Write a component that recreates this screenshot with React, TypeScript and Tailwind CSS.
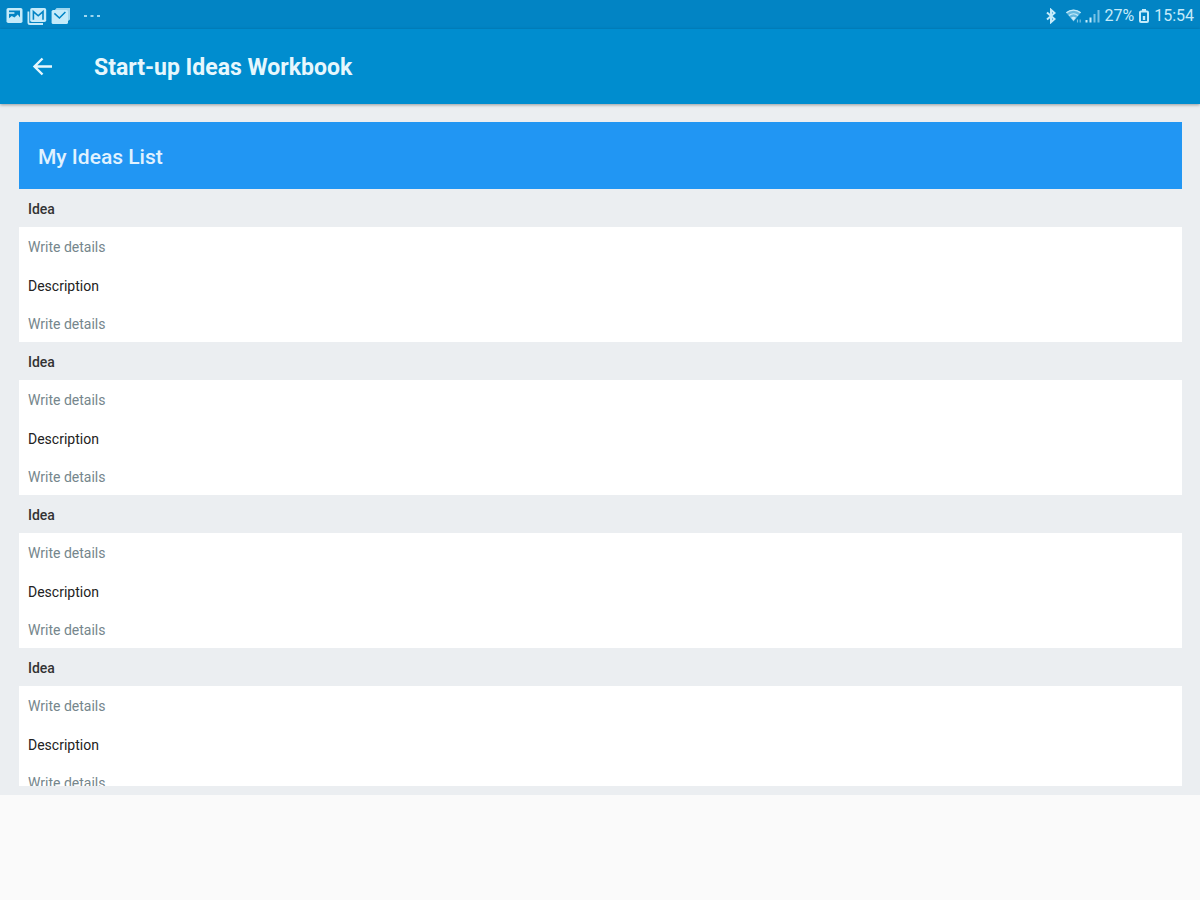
import { useState } from "react";

type Entry = {
  idea: string;
  description: string;
};

const emptyEntries: Entry[] = Array.from({ length: 4 }, () => ({ idea: "", description: "" }));

const PictureIcon = () => (
  <svg width="17" height="17" viewBox="0 0 17 17" aria-hidden="true">
    <rect x="0.5" y="1" width="16" height="15" rx="1.8" fill="currentColor" />
    <path d="M3 3.6h11v7l-2.2-3.2-3.4 3L5.8 9 3 11.2z" fill="#0284c4" />
    <path d="M3 5.2h5.4v1.6H3z" fill="currentColor" />
  </svg>
);

const GmailIcon = () => (
  <svg width="20" height="18" viewBox="0 0 20 18" aria-hidden="true">
    <path d="M1.4 4.5v10.9A1.6 1.6 0 0 0 3 17h13" fill="none" stroke="currentColor" strokeWidth="1.8" />
    <rect x="3.2" y="1" width="16" height="14" rx="1.8" fill="currentColor" />
    <path d="M6.4 12.8V4.6l4.8 4.2L16 4.6v8.2" fill="none" stroke="#0284c4" strokeWidth="1.6" />
  </svg>
);

const MailIcon = () => (
  <svg width="20" height="18" viewBox="0 0 20 18" aria-hidden="true">
    <path d="M4 2.8 5.6 1H19v11.5L17 14" fill="currentColor" opacity="0.8" />
    <rect x="0.6" y="3" width="16.4" height="14" rx="1.6" fill="currentColor" />
    <path d="m3.4 6.4 5 4.6 6-6" fill="none" stroke="#0284c4" strokeWidth="1.5" />
  </svg>
);

const BluetoothIcon = () => (
  <svg width="12" height="16" viewBox="0 0 12 16" aria-hidden="true">
    <path d="m2 4.5 7.5 6.6L6 14.2V1.8l3.5 3.1L2 11.5" fill="none" stroke="currentColor" strokeWidth="2" />
  </svg>
);

const WifiIcon = () => (
  <svg width="18" height="16" viewBox="0 0 18 16" aria-hidden="true">
    <path d="M1 4.6C5.2.8 11.8.8 16 4.6l-7.5 9z" fill="currentColor" opacity="0.5" />
    <path d="M1.4 4.8c4-3.6 10.2-3.6 14.2 0M4 7.600c2.600-2.200 6.400-2.200 9 0" fill="none" stroke="currentColor" strokeWidth="1.3" />
    <path d="M6 9.8a3.8 3.8 0 0 1 5 0l-2.5 3z" fill="currentColor" />
    <path d="M12.5 14.5v-3M15.2 11.5v3" stroke="currentColor" strokeWidth="1.2" opacity="0.6" />
  </svg>
);

const SignalIcon = () => (
  <svg width="15" height="16" viewBox="0 0 15 16" aria-hidden="true">
    <path d="M1.5 14.5V12M5.5 14.5v-5" stroke="currentColor" strokeWidth="2" />
    <path d="M9.5 14.5V6M13.5 14.5V2" stroke="currentColor" strokeWidth="2" opacity="0.6" />
  </svg>
);

const BatteryIcon = () => (
  <svg width="12" height="16" viewBox="0 0 12 16" aria-hidden="true">
    <path d="M4 1h4v2H4z" fill="currentColor" />
    <rect x="2" y="3.5" width="8" height="10.5" rx="1" fill="none" stroke="currentColor" strokeWidth="2" />
    <path d="M4.8 8h2.400v4H4.8z" fill="currentColor" />
  </svg>
);

const StatusBar = () => (
  <div className="flex h-[29px] shrink-0 items-center justify-between bg-[#0284c4] px-[6px] pt-[2px] text-[#c5ebfa]">
    <div className="flex items-center gap-1">
      <PictureIcon />
      <GmailIcon />
      <MailIcon />
      <svg className="ml-2" width="18" height="4" viewBox="0 0 18 4" aria-hidden="true">
        <path d="M1 1h3v2H1zM7.5 1h3v2h-3zM14 1h3v2h-3z" fill="currentColor" opacity="0.8" />
      </svg>
    </div>
    <div className="flex items-center gap-1 text-base">
      <BluetoothIcon />
      <div className="ml-1 flex items-center gap-[2px]">
        <WifiIcon />
        <SignalIcon />
      </div>
      <span>27%</span>
      <BatteryIcon />
      <span>15:54</span>
    </div>
  </div>
);

const IdeaEntry = ({
  id,
  entry,
  onChange,
}: {
  id: number;
  entry: Entry;
  onChange: (patch: Partial<Entry>) => void;
}) => (
  <div>
    <label htmlFor={`idea-${id}`} className="flex h-[38px] items-center px-[9px] pt-[2px] font-medium text-[#333]">
      Idea
    </label>
    <div className="bg-white">
      <input
        id={`idea-${id}`}
        value={entry.idea}
        onChange={(e) => onChange({ idea: e.target.value })}
        placeholder="Write details"
        className="block h-[38px] w-full px-[9px] pt-[2px] outline-none placeholder:text-[#75868c]"
      />
      <label htmlFor={`description-${id}`} className="flex h-[39px] items-center px-[9px] pt-[2px] text-[#222]">
        Description
      </label>
      <input
        id={`description-${id}`}
        value={entry.description}
        onChange={(e) => onChange({ description: e.target.value })}
        placeholder="Write details"
        className="block h-[38px] w-full px-[9px] pt-[2px] outline-none placeholder:text-[#75868c]"
      />
    </div>
  </div>
);

export default function App() {
  const [entries, setEntries] = useState(emptyEntries);

  const update = (index: number, patch: Partial<Entry>) => {
    setEntries((prev) => prev.map((entry, i) => (i === index ? { ...entry, ...patch } : entry)));
  };

  return (
    <div className="flex h-screen flex-col bg-[#fafafa] pb-[105px] font-[Roboto,sans-serif]">
      <StatusBar />
      <header className="z-10 flex h-[75px] shrink-0 items-center bg-[#008dcf] px-[30px] text-[#e6f7fd] shadow-[0_1px_3px_rgba(0,0,0,0.35)]">
        <button type="button" aria-label="Back" className="mr-[38px]">
          <svg width="26" height="26" viewBox="0 0 26 26" aria-hidden="true">
            <path d="M22 12.5H5M12.5 4.5l-8 8 8 8" fill="none" stroke="currentColor" strokeWidth="2.4" />
          </svg>
        </button>
        <h1 className="pt-[3px] text-[23px] leading-8 font-bold">Start-up Ideas Workbook</h1>
      </header>

      <main className="flex min-h-0 flex-1 flex-col bg-[#ebeef1] pt-[18px] pr-[18px] pb-[9px] pl-[19px]">
        <div className="min-h-0 flex-1 overflow-y-auto text-sm [scrollbar-width:none]">
          <h2 className="flex h-[67px] items-center bg-[#2196f3] px-[19px] pt-[2px] text-[21px] font-medium text-[#e0f2ff]">
            My Ideas List
          </h2>
          {entries.map((entry, index) => (
            <IdeaEntry key={index} id={index} entry={entry} onChange={(patch) => update(index, patch)} />
          ))}
        </div>
      </main>
    </div>
  );
}
